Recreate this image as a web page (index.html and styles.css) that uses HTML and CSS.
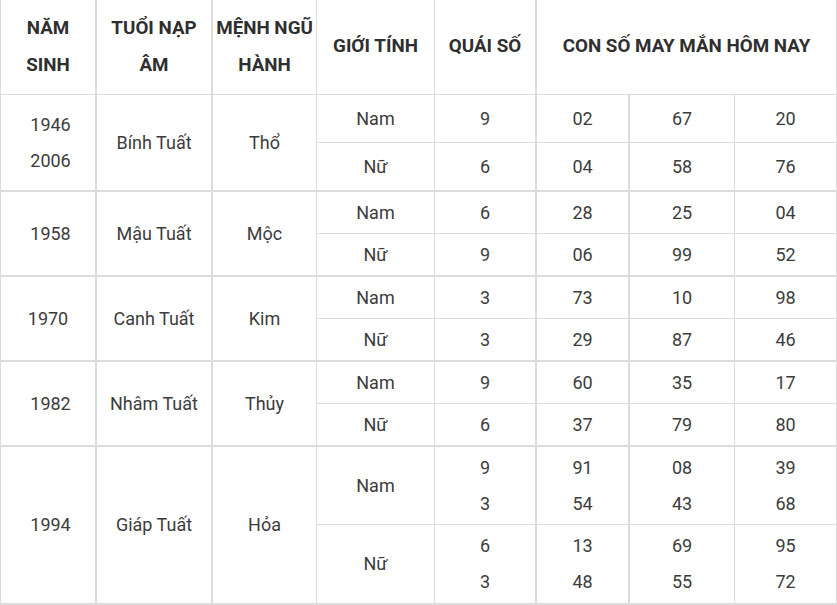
FILE: index.html
```html
<!DOCTYPE html>
<html lang="vi">
<head>
<meta charset="utf-8">
<title>Con số may mắn</title>
<link rel="stylesheet" href="styles.css">
</head>
<body>
<div class="table">
  <div class="cell head c-first b-thick">NĂM<br>SINH</div>
  <div class="cell head b-thick">TUỔI NẠP<br>ÂM</div>
  <div class="cell head">MỆNH NGŨ<br>HÀNH</div>
  <div class="cell head">GIỚI TÍNH</div>
  <div class="cell head b-thick">QUÁI SỐ</div>
  <div class="cell head span3">CON SỐ MAY MẮN HÔM NAY</div>

  <div class="cell c-first b-thick span2 g-end year">1946<br>2006</div>
  <div class="cell b-thick span2 g-end">Bính Tuất</div>
  <div class="cell span2 g-end">Thổ</div>
  <div class="cell">Nam</div>
  <div class="cell b-thick">9</div>
  <div class="cell b-thick">02</div>
  <div class="cell">67</div>
  <div class="cell">20</div>
  <div class="cell g-end">Nữ</div>
  <div class="cell b-thick g-end">6</div>
  <div class="cell b-thick g-end">04</div>
  <div class="cell g-end">58</div>
  <div class="cell g-end">76</div>

  <div class="cell c-first b-thick span2 g-end year">1958</div>
  <div class="cell b-thick span2 g-end">Mậu Tuất</div>
  <div class="cell span2 g-end">Mộc</div>
  <div class="cell">Nam</div>
  <div class="cell b-thick">6</div>
  <div class="cell b-thick">28</div>
  <div class="cell">25</div>
  <div class="cell">04</div>
  <div class="cell g-end">Nữ</div>
  <div class="cell b-thick g-end">9</div>
  <div class="cell b-thick g-end">06</div>
  <div class="cell g-end">99</div>
  <div class="cell g-end">52</div>

  <div class="cell c-first b-thick span2 g-end">1970</div>
  <div class="cell b-thick span2 g-end">Canh Tuất</div>
  <div class="cell span2 g-end">Kim</div>
  <div class="cell">Nam</div>
  <div class="cell b-thick">3</div>
  <div class="cell b-thick">73</div>
  <div class="cell">10</div>
  <div class="cell">98</div>
  <div class="cell g-end">Nữ</div>
  <div class="cell b-thick g-end">3</div>
  <div class="cell b-thick g-end">29</div>
  <div class="cell g-end">87</div>
  <div class="cell g-end">46</div>

  <div class="cell c-first b-thick span2 g-end year">1982</div>
  <div class="cell b-thick span2 g-end">Nhâm Tuất</div>
  <div class="cell span2 g-end">Thủy</div>
  <div class="cell">Nam</div>
  <div class="cell b-thick">9</div>
  <div class="cell b-thick">60</div>
  <div class="cell">35</div>
  <div class="cell">17</div>
  <div class="cell g-end">Nữ</div>
  <div class="cell b-thick g-end">6</div>
  <div class="cell b-thick g-end">37</div>
  <div class="cell g-end">79</div>
  <div class="cell g-end">80</div>

  <div class="cell c-first b-thick span2 g-end year">1994</div>
  <div class="cell b-thick span2 g-end">Giáp Tuất</div>
  <div class="cell span2 g-end">Hỏa</div>
  <div class="cell">Nam</div>
  <div class="cell b-thick">9<br>3</div>
  <div class="cell b-thick">91<br>54</div>
  <div class="cell">08<br>43</div>
  <div class="cell">39<br>68</div>
  <div class="cell g-end">Nữ</div>
  <div class="cell b-thick g-end">6<br>3</div>
  <div class="cell b-thick g-end">13<br>48</div>
  <div class="cell g-end">69<br>55</div>
  <div class="cell g-end">95<br>72</div>
</div>
</body>
</html>
```

FILE: styles.css
```css
html, body {
  margin: 0;
  padding: 0;
  background: #ffffff;
}

.table {
  display: grid;
  width: 837px;
  grid-template-columns: 97px 116px 104px 118px 102px 93px 105px 102px;
  grid-template-rows: 95px 48px 49px 42px 43px 42px 43px 42px 43px 78px 80px;
  font-family: Roboto, "Noto Sans", sans-serif;
  font-size: 18px;
  line-height: 36px;
  color: #3c3c3c;
}

.cell {
  box-sizing: border-box;
  display: flex;
  flex-direction: column;
  justify-content: center;
  align-items: center;
  text-align: center;
  border-right: 1px solid #dcdcdc;
  border-bottom: 1px solid #dcdcdc;
}

.head {
  font-size: 18.8px;
  font-weight: 700;
  color: #2f2f2f;
  line-height: 37px;
  padding-bottom: 1px;
}

.year {
  padding-left: 5px;
}

.c-first {
  border-left: 1px solid #dcdcdc;
}

.b-thick {
  border-right-width: 2px;
}

.g-end {
  border-bottom-width: 2px;
}

.span2 {
  grid-row: span 2;
}

.span3 {
  grid-column: span 3;
}
```
